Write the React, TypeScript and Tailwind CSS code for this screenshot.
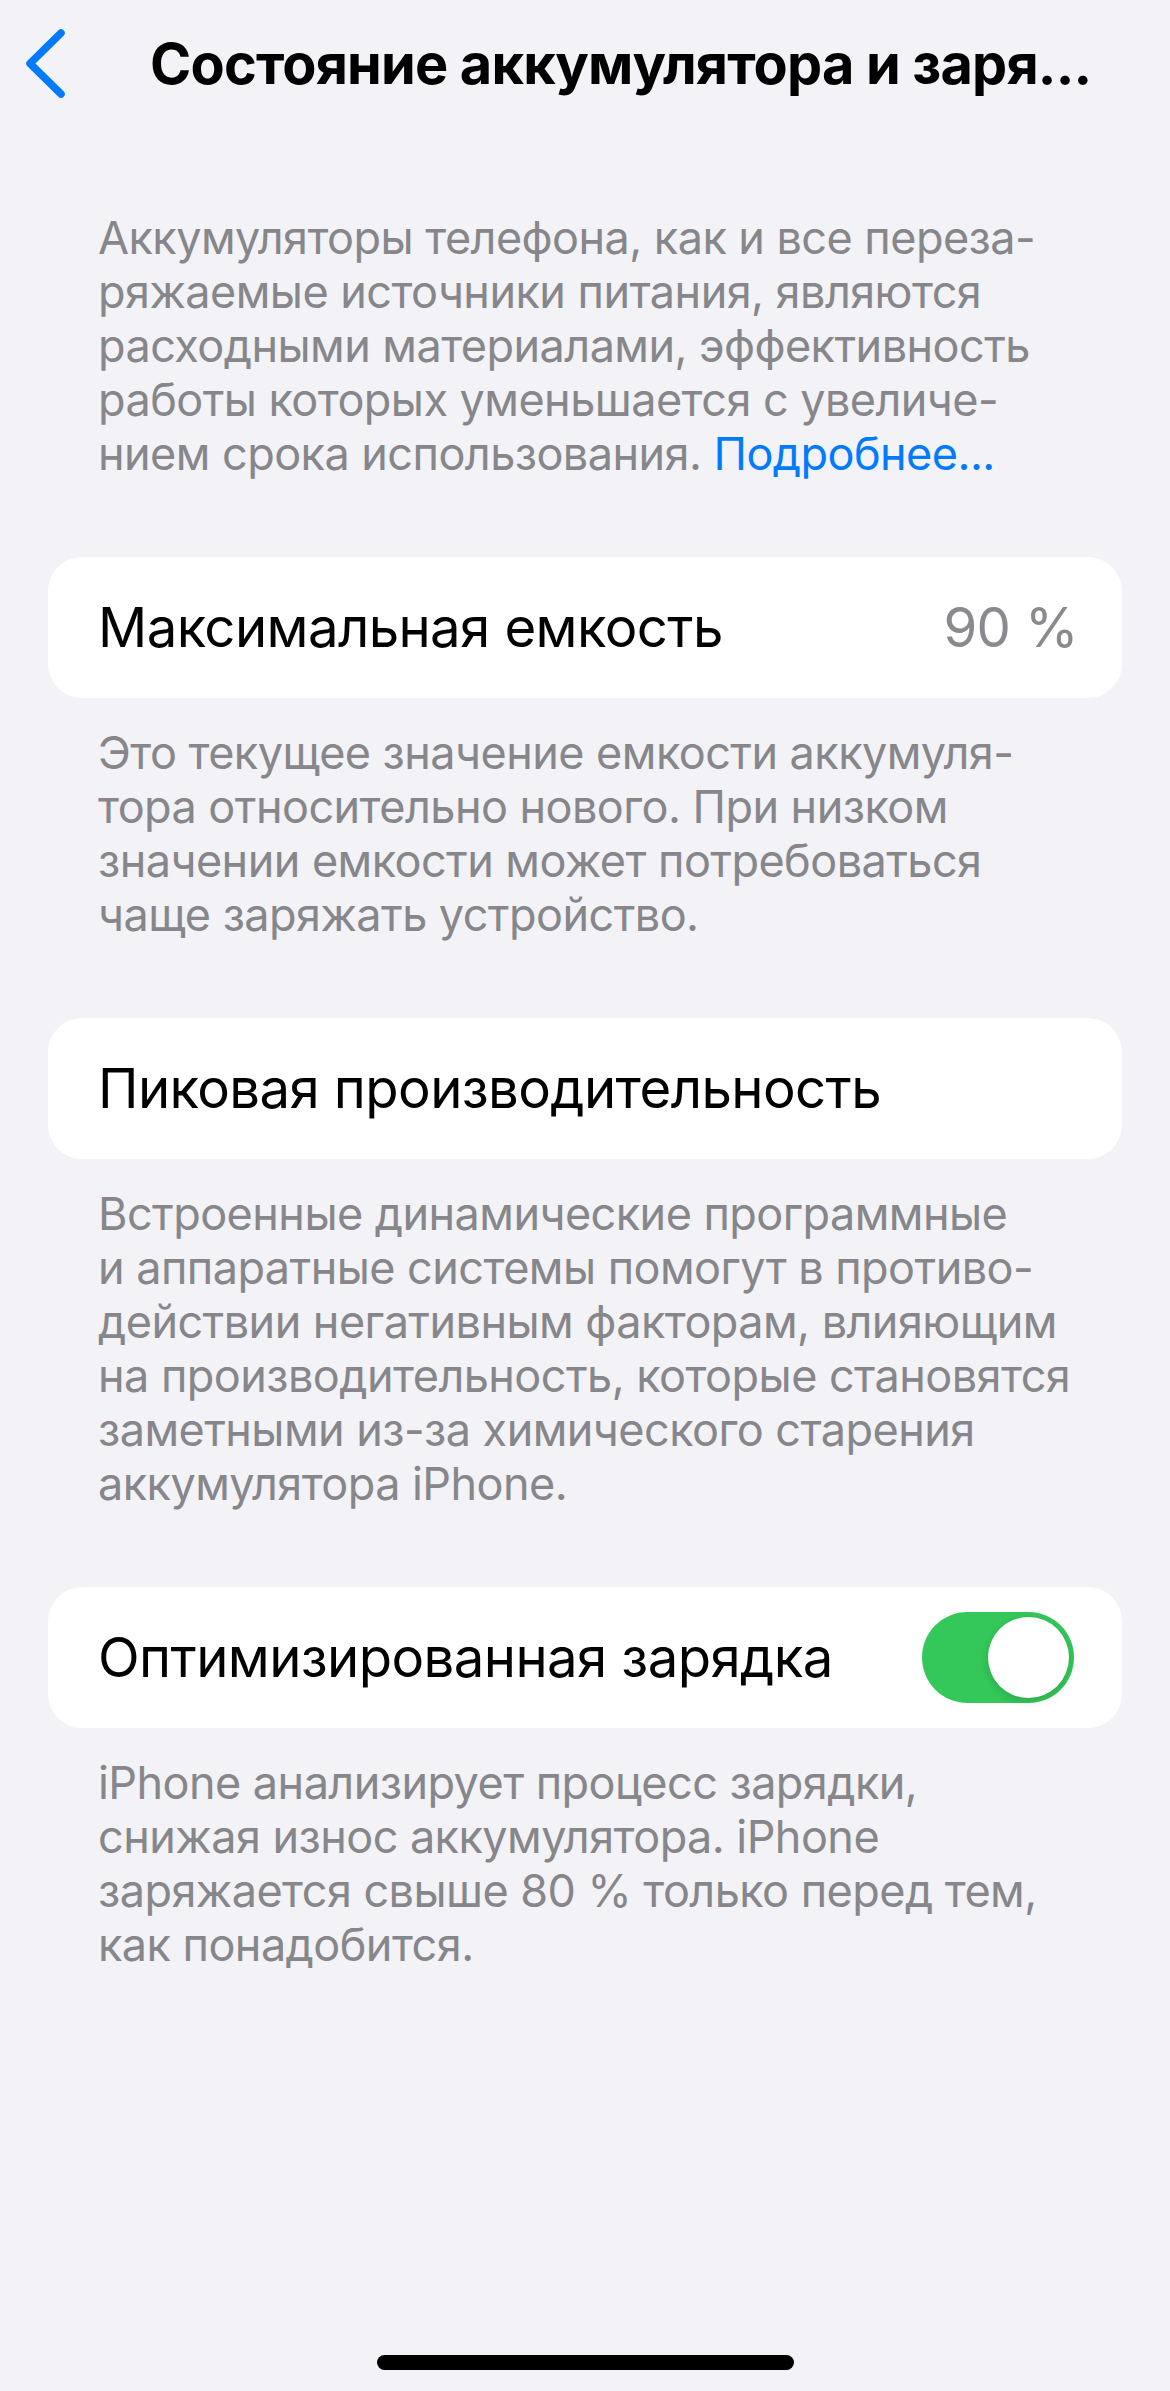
import React from 'react';

const FONT = "font-['Inter','Noto_Sans',sans-serif]";

// Footer/description lines are broken by hand, like the iOS hyphenated layout
const INTRO = [
  'Аккумуляторы телефона, как и все переза-',
  'ряжаемые источники питания, являются',
  'расходными материалами, эффективность',
  'работы которых уменьшается с увеличе-',
];

const CAPACITY_NOTE = [
  'Это текущее значение емкости аккумуля-',
  'тора относительно нового. При низком',
  'значении емкости может потребоваться',
  'чаще заряжать устройство.',
];

const PEAK_NOTE = [
  'Встроенные динамические программные',
  'и аппаратные системы помогут в противо-',
  'действии негативным факторам, влияющим',
  'на производительность, которые становятся',
  'заметными из-за химического старения',
  'аккумулятора iPhone.',
];

const CHARGING_NOTE = [
  'iPhone анализирует процесс зарядки,',
  'снижая износ аккумулятора. iPhone',
  'заряжается свыше 80 % только перед тем,',
  'как понадобится.',
];

function Footer({ lines }: { lines: string[] }) {
  return (
    <div className="mt-[28px] px-[50px] text-[45px] leading-[54px] tracking-[-0.55px] text-[#86868b]">
      {lines.map((l) => (
        <div key={l} className="whitespace-nowrap">{l}</div>
      ))}
    </div>
  );
}

function Card({ children }: { children: React.ReactNode }) {
  return (
    <div className="mt-[76px] h-[141px] rounded-[34px] bg-white px-[50px] flex items-center justify-between">
      {children}
    </div>
  );
}

function Toggle() {
  return (
    <div className="w-[152px] h-[91px] rounded-full bg-[#34c759] flex items-center justify-end pr-[5px] -mr-[2px]">
      <div className="w-[81px] h-[81px] rounded-full bg-white shadow-[0_3px_8px_rgba(0,0,0,0.15)]" />
    </div>
  );
}

export default function App() {
  return (
    <div className={`${FONT} min-h-[2391px] bg-[#f2f2f7] flex flex-col`}>
      {/* Navigation bar */}
      <div className="h-[128px] flex items-center pl-[22px]">
        <svg width="44" height="70" viewBox="0 0 44 70" fill="none">
          <path d="M39 4 L8 34.5 L39 65" stroke="#007aff" strokeWidth="7.5" strokeLinecap="round" strokeLinejoin="round" />
        </svg>
        <div className="ml-[84px] whitespace-nowrap text-[55.8px] font-bold tracking-[-0.8px] text-black">
          Состояние аккумулятора и заря...
        </div>
      </div>

      <div className="px-[48px]">
        <div className="mt-[83px] px-[50px] text-[45px] leading-[54px] tracking-[-0.55px] text-[#86868b]">
          {INTRO.map((l) => (
            <div key={l} className="whitespace-nowrap">{l}</div>
          ))}
          <div className="whitespace-nowrap">
            нием срока использования. <span className="text-[#007aff]">Подробнее...</span>
          </div>
        </div>

        <Card>
          <span className="text-[54.5px] tracking-[-0.6px] text-black">Максимальная емкость</span>
          <span className="text-[54.5px] tracking-[-0.6px] text-[#8a8a8e] -mr-[6px]">90 %</span>
        </Card>
        <Footer lines={CAPACITY_NOTE} />

        <Card>
          <span className="text-[54.5px] tracking-[-0.6px] text-black">Пиковая производительность</span>
        </Card>
        <Footer lines={PEAK_NOTE} />

        <Card>
          <span className="text-[54.5px] tracking-[-0.6px] text-black">Оптимизированная зарядка</span>
          <Toggle />
        </Card>
        <Footer lines={CHARGING_NOTE} />
      </div>

      {/* Home indicator */}
      <div className="mt-auto pb-[21px] flex justify-center">
        <div className="w-[417px] h-[15px] rounded-full bg-black" />
      </div>
    </div>
  );
}
